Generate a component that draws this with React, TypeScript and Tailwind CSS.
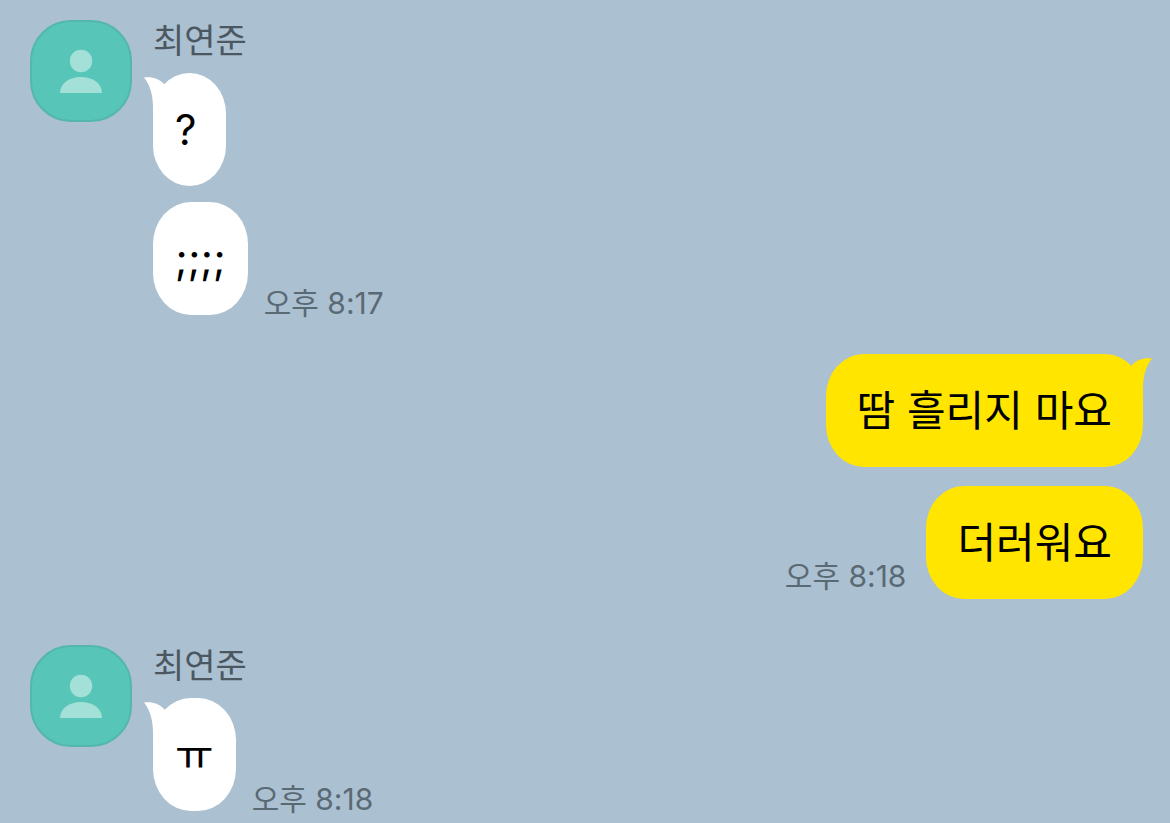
type Side = "left" | "right";

interface Message {
  text: string;
  time?: string;
}

interface Group {
  id: number;
  side: Side;
  name?: string;
  messages: Message[];
}

const GROUPS: Group[] = [
  {
    id: 1,
    side: "left",
    name: "최연준",
    messages: [{ text: "?" }, { text: ";;;;", time: "오후 8:17" }],
  },
  {
    id: 2,
    side: "right",
    messages: [{ text: "땀 흘리지 마요" }, { text: "더러워요", time: "오후 8:18" }],
  },
  {
    id: 3,
    side: "left",
    name: "최연준",
    messages: [{ text: "ㅠ", time: "오후 8:18" }],
  },
];

function Avatar() {
  return (
    <div className="h-[102px] w-[102px] shrink-0 rounded-[41px] border-2 border-[#53b7ad] bg-[#57c5b8]">
      <svg viewBox="0 0 98 98" className="h-full w-full" fill="#a3e0d8" aria-hidden="true">
        <circle cx="49" cy="39" r="11.2" />
        <path d="M28 71C28 61.5 37 55 49 55s21 6.500 21 16z" />
      </svg>
    </div>
  );
}

// 말풍선 꼬리
function Tail({ side }: { side: Side }) {
  return (
    <svg
      viewBox="0 0 24 36"
      className={
        side === "left"
          ? "absolute top-1 -left-[9px] h-9 w-6 text-white"
          : "absolute top-1 -right-[9px] h-9 w-6 -scale-x-100 text-[#ffe500]"
      }
      fill="currentColor"
      aria-hidden="true"
    >
      <path d="M0 .6C8-.6 15 1.600 20.500 7.500L24 36H9C9.500 22 7.500 10 0 .6z" />
    </svg>
  );
}

function Bubble({ side, text, tail }: { side: Side; text: string; tail: boolean }) {
  return (
    <div
      className={
        side === "left"
          ? "relative min-w-[73px] rounded-[38px_/_42px] bg-white px-[22px] py-7"
          : "relative rounded-[38px_/_42px] bg-[#ffe500] px-[31px] py-7"
      }
    >
      {tail && <Tail side={side} />}
      <p className="relative text-[42px] leading-[57px] text-black">{text}</p>
    </div>
  );
}

function MessageGroup({ group }: { group: Group }) {
  const { side, name, messages } = group;

  return (
    <section className={side === "left" ? "flex items-start gap-[21px]" : "flex justify-end"}>
      {side === "left" && <Avatar />}
      <div>
        {name && <h2 className="mb-[11px] text-[34px] leading-[42px] text-[#4b5861]">{name}</h2>}
        <div className={side === "left" ? "flex flex-col items-start gap-4" : "flex flex-col items-end gap-[19px]"}>
          {messages.map((m, i) => (
            <div
              key={m.text}
              className={
                side === "left"
                  ? "flex items-end gap-4"
                  : "flex flex-row-reverse items-end gap-5"
              }
            >
              <Bubble side={side} text={m.text} tail={i === 0} />
              {m.time && (
                <time
                  className={
                    side === "left"
                      ? "text-[30px] leading-6 text-[#5a6a74]"
                      : "pb-[11px] text-[30px] leading-6 text-[#5a6a74]"
                  }
                >
                  {m.time}
                </time>
              )}
            </div>
          ))}
        </div>
      </div>
    </section>
  );
}

export default function App() {
  return (
    <main className="flex min-h-screen flex-col bg-[#abc0d1] pt-5 pr-[27px] pb-3 pl-[30px] font-['Inter','Noto_Sans_CJK_KR',sans-serif]">
      <div className="flex flex-col gap-[39px]">
        <MessageGroup group={GROUPS[0]} />
        <MessageGroup group={GROUPS[1]} />
      </div>
      <div className="mt-[46px]">
        <MessageGroup group={GROUPS[2]} />
      </div>
    </main>
  );
}
